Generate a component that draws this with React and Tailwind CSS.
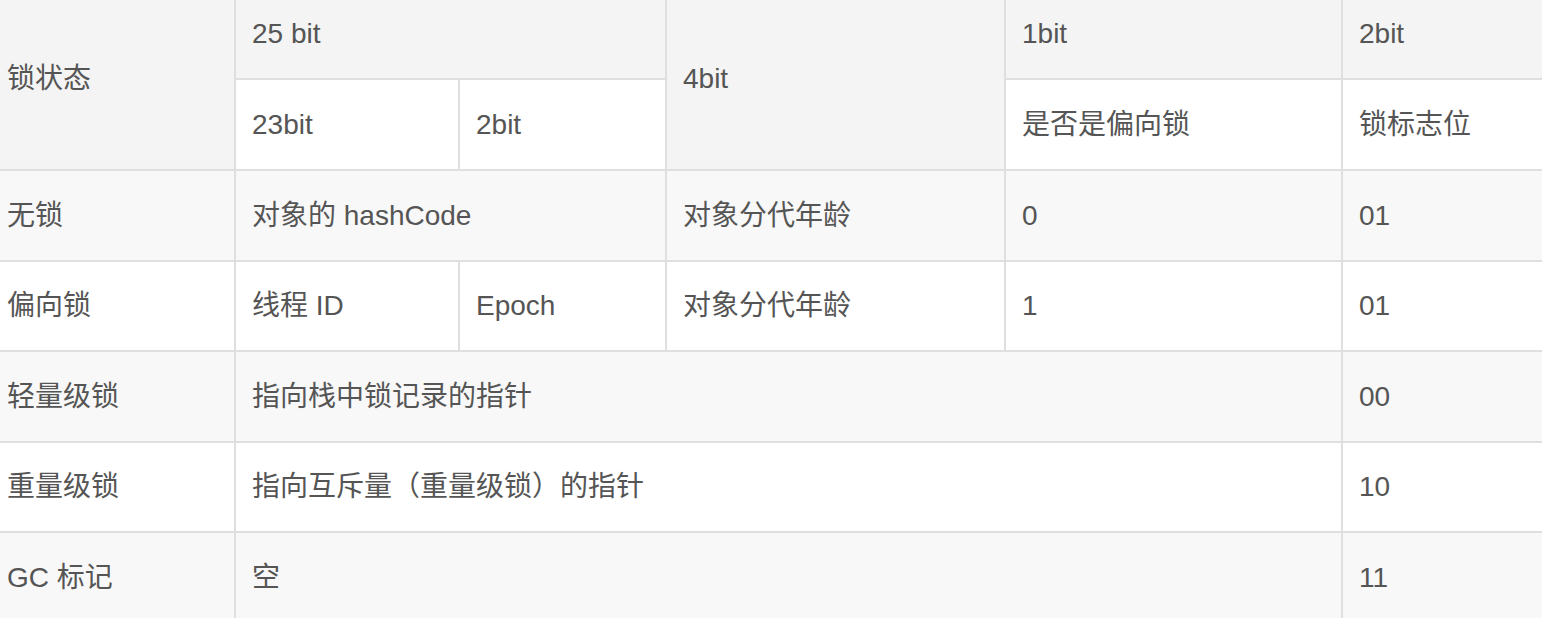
const head = 'bg-[#f4f4f4]'
const stripe = 'bg-[#f8f8f8]'
const cell = 'border-2 border-[#dfdfdf] px-4 align-middle text-left font-normal'

export default function App() {
  return (
    <div
      className="w-[1542px] h-[618px] overflow-hidden bg-white text-[28px] leading-[1.5] text-[#555]"
      style={{ fontFamily: '"Liberation Sans", "Noto Sans CJK SC", sans-serif' }}
    >
      <table className="table-fixed border-collapse w-[1600px] -mt-[13px] -ml-[11px]">
        <colgroup>
          <col className="w-[245px]" />
          <col className="w-[224px]" />
          <col className="w-[207px]" />
          <col className="w-[339px]" />
          <col className="w-[337px]" />
          <col className="w-[250px]" />
        </colgroup>
        <thead>
          <tr className="h-[91px]">
            <th rowSpan={2} className={`${cell} ${head}`}>锁状态</th>
            <th colSpan={2} className={`${cell} ${head}`}>25 bit</th>
            <th rowSpan={2} className={`${cell} ${head}`}>4bit</th>
            <th className={`${cell} ${head}`}>1bit</th>
            <th className={`${cell} ${head}`}>2bit</th>
          </tr>
          <tr className="h-[91px]">
            <th className={`${cell} bg-white`}>23bit</th>
            <th className={`${cell} bg-white`}>2bit</th>
            <th className={`${cell} bg-white`}>是否是偏向锁</th>
            <th className={`${cell} bg-white`}>锁标志位</th>
          </tr>
        </thead>
        <tbody>
          <tr className={`h-[91px] ${stripe}`}>
            <td className={cell}>无锁</td>
            <td colSpan={2} className={cell}>对象的 hashCode</td>
            <td className={cell}>对象分代年龄</td>
            <td className={cell}>0</td>
            <td className={cell}>01</td>
          </tr>
          <tr className="h-[90px] bg-white">
            <td className={cell}>偏向锁</td>
            <td className={cell}>线程 ID</td>
            <td className={cell}>Epoch</td>
            <td className={cell}>对象分代年龄</td>
            <td className={cell}>1</td>
            <td className={cell}>01</td>
          </tr>
          <tr className={`h-[91px] ${stripe}`}>
            <td className={cell}>轻量级锁</td>
            <td colSpan={4} className={cell}>指向栈中锁记录的指针</td>
            <td className={cell}>00</td>
          </tr>
          <tr className="h-[90px] bg-white">
            <td className={cell}>重量级锁</td>
            <td colSpan={4} className={cell}>指向互斥量（重量级锁）的指针</td>
            <td className={cell}>10</td>
          </tr>
          <tr className={`h-[91px] ${stripe}`}>
            <td className={cell}>GC 标记</td>
            <td colSpan={4} className={cell}>空</td>
            <td className={cell}>11</td>
          </tr>
        </tbody>
      </table>
    </div>
  )
}
